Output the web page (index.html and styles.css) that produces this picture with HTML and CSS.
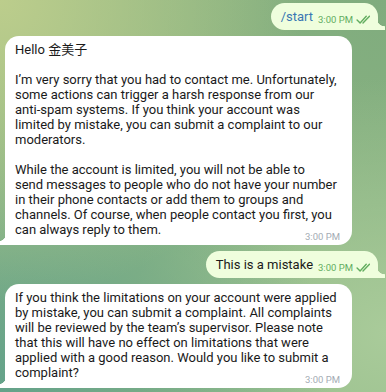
FILE: index.html
```html
<!DOCTYPE html>
<html lang="en">
  <head>
    <meta charset="UTF-8" />
    <meta name="viewport" content="width=device-width, initial-scale=1.0" />
    <title>Chat</title>
    <link rel="stylesheet" href="styles.css">
  </head>
  <body>
    <div class="chat">
      <div class="msg out">
        <div class="bubble">
          <span class="command">/start</span>
          <span class="meta">3:00 PM<svg class="ticks" viewBox="0 1 13 8" width="14" height="9"><path d="M1 5.5 L3.8 8.3 L9.5 2" /><path d="M6.5 8.3 L12.5 2" /></svg></span>
        </div>
      </div>

      <div class="msg in">
        <div class="bubble">
          <p>Hello 金美子</p>
          <p>I’m very sorry that you had to contact me. Unfortunately, some actions can trigger a harsh response from our anti-spam systems. If you think your account was limited by mistake, you can submit a complaint to our moderators.</p>
          <p>While the account is limited, you will not be able to<br>send messages to people who do not have your number in their phone contacts or add them to groups and channels. Of course, when people contact you first, you can always reply to them.<span class="meta">3:00 PM</span></p>
        </div>
      </div>

      <div class="msg out">
        <div class="bubble">
          This is a mistake
          <span class="meta">3:00 PM<svg class="ticks" viewBox="0 1 13 8" width="14" height="9"><path d="M1 5.5 L3.8 8.3 L9.5 2" /><path d="M6.5 8.3 L12.5 2" /></svg></span>
        </div>
      </div>

      <div class="msg in">
        <div class="bubble">
          <p>If you think the limitations on your account were applied by mistake, you can submit a complaint. All complaints will be reviewed by the team’s supervisor. Please note that this will have no effect on limitations that were applied with a good reason. Would you like to submit a complaint?<span class="meta">3:00 PM</span></p>
        </div>
      </div>
    </div>
  </body>
</html>
```

FILE: styles.css
```css
body {
  margin: 0;
  height: 392px;
  overflow: hidden;
  font-family: Roboto, "Noto Sans CJK SC", sans-serif;
  font-size: 13px;
  color: #1a1a1a;
  background-color: #8db683;
  background-image:
    radial-gradient(circle at 0% 0%, #bccd8c 0, rgba(188, 205, 140, 0) 55%),
    radial-gradient(circle at 0% 100%, #64a28a 0, rgba(100, 162, 138, 0) 60%),
    radial-gradient(circle at 100% 85%, #a9cb9a 0, rgba(169, 203, 154, 0) 50%),
    radial-gradient(circle at 100% 0%, #80ac7e 0, rgba(128, 172, 126, 0) 60%);
}

.chat {
  display: flex;
  flex-direction: column;
  gap: 6px;
  padding: 3px 8px 0 5px;
}

.msg {
  display: flex;
}

.msg.out {
  justify-content: flex-end;
}

.bubble {
  position: relative;
  display: flow-root;
  line-height: 15px;
  border-radius: 14px;
}

.in .bubble {
  width: 347px;
  box-sizing: border-box;
  padding: 6px 12px 8px 10px;
  background: #fff;
  border-bottom-left-radius: 0;
}

.out .bubble {
  padding: 6px 8px 6px 10px;
  background: #effedd;
  border-bottom-right-radius: 0;
}

.in .bubble::after,
.out .bubble::after {
  content: "";
  position: absolute;
  bottom: 0;
  width: 8px;
  height: 12px;
}

.in .bubble::after {
  left: -7px;
  background: radial-gradient(circle at 0 0, transparent 8px, #fff 8.6px);
}

.out .bubble::after {
  right: -7px;
  background: radial-gradient(circle at 100% 0, transparent 8px, #effedd 8.6px);
}

.bubble p {
  margin: 0 0 15px;
}

.bubble p:last-child {
  margin-bottom: 0;
}

.command {
  color: #3a77b3;
}

.meta {
  float: right;
  position: relative;
  top: 8px;
  margin-left: 10px;
  font-size: 9.5px;
  line-height: 14px;
  color: #a4acb4;
}

.out .meta {
  top: 4px;
  color: #62ad5f;
  margin-left: 5px;
}

.ticks {
  vertical-align: -1px;
  margin-left: 3px;
  fill: none;
  stroke: #62ad5f;
  stroke-width: 1.3;
  stroke-linecap: round;
  stroke-linejoin: round;
}
```
